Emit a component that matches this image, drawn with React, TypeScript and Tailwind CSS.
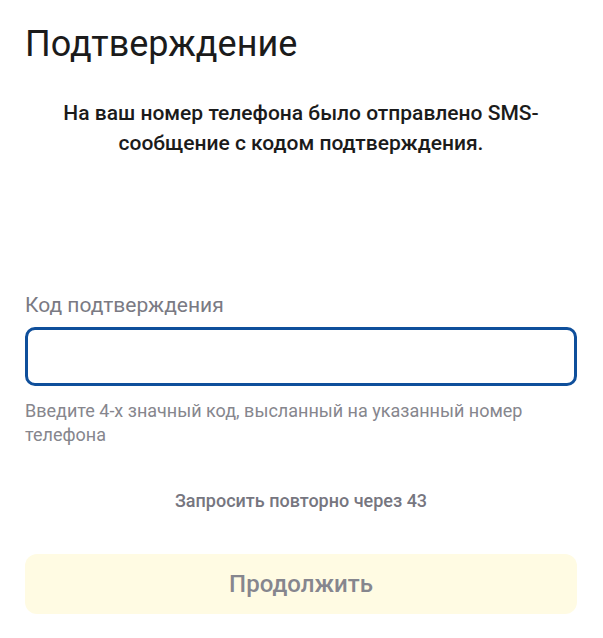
import React, { useState } from 'react';

const App: React.FC = () => {
  const [code, setCode] = useState('');
  const seconds = 43;

  return (
    <div className="min-h-screen bg-white font-['Roboto',sans-serif] pl-[25px] pr-[26px] pt-[23px] pb-6 w-[603px]">
      <h1 className="text-[36px] leading-[42px] font-normal text-[#1b1b1b]">Подтверждение</h1>

      <p className="mt-[33px] px-[20px] text-center text-[21px] leading-[30px] font-medium text-[#1b1b1b]">
        На ваш номер телефона было отправлено SMS-сообщение с кодом подтверждения.
      </p>

      <div className="mt-[134px]">
        <label className="block text-[21px] leading-[26px] text-[#7a7a83]">Код подтверждения</label>
        <input
          value={code}
          onChange={(e) => setCode(e.target.value)}
          className="mt-[9px] block w-full h-[59px] rounded-[10px] border-[3px] border-[#0f4f9b] px-4 text-[20px] outline-none"
        />
        <p className="mt-[13px] text-[18px] leading-[24px] text-[#86868d]">
          Введите 4-х значный код, высланный на указанный номер телефона
        </p>
      </div>

      <p className="mt-[42px] text-center text-[18px] leading-[24px] font-medium text-[#76767f]">
        Запросить повторно через {seconds}
      </p>

      <button
        disabled={code.length < 4}
        className="mt-[41px] w-full h-[60px] rounded-[12px] bg-[#fffbe3] text-[24px] font-medium text-[#86868e]"
      >
        Продолжить
      </button>
    </div>
  );
};

export default App;
